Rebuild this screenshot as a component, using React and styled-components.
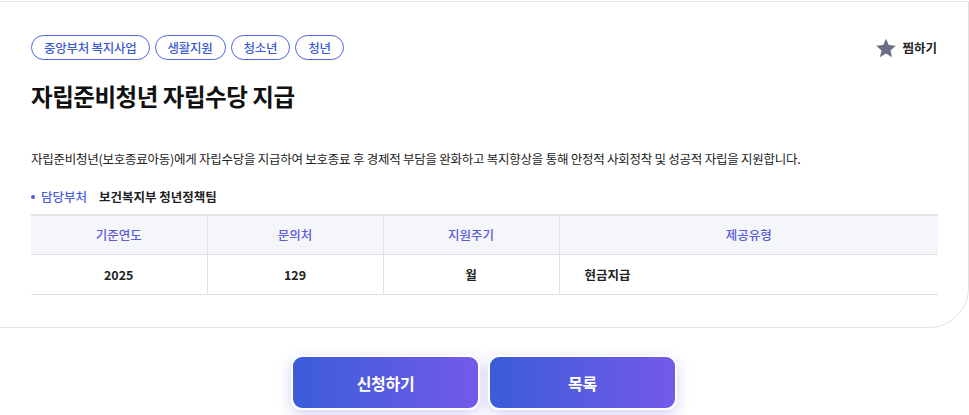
import React from 'react'
import styled, { createGlobalStyle } from 'styled-components'

const GlobalStyle = createGlobalStyle`
    * { box-sizing: border-box; }
    body {
        margin: 0;
        background: #fff;
        font-family: "Noto Sans CJK KR", "Noto Sans", sans-serif;
        color: #222;
        overflow: hidden;
    }
`

const StyledPage = styled.div`
    width: 969px;
    height: 415px;
    padding-top: 1px;
`

const StyledCard = styled.section`
    width: 971px;
    margin-left: -2px;
    height: 327px;
    border: 1px solid #e2e2e4;
    border-radius: 0 0 40px 4px;
    padding: 33px 31px 0 32px;
`

const StyledTop = styled.div`
    display: flex;
    align-items: center;
    justify-content: space-between;
`

const StyledTags = styled.ul`
    display: flex;
    gap: 5px;
    list-style: none;
    margin: 0;
    padding: 0;
`

const StyledTag = styled.li`
    height: 25px;
    padding: 0 12px;
    border: 1px solid #4a69e2;
    border-radius: 13px;
    color: #3d5bd6;
    font-size: 12.5px;
    font-weight: 500;
    display: flex;
    align-items: center;
    letter-spacing: -0.02em;
`

const StyledLike = styled.button`
    display: flex;
    align-items: center;
    gap: 5px;
    border: none;
    background: none;
    padding: 0;
    font-family: inherit;
    font-size: 12.5px;
    font-weight: 700;
    color: #222;
    svg {
        width: 22px;
        height: 22px;
    }
`

const StyledTitle = styled.h1`
    margin: 20px 0 0;
    font-size: 23.5px;
    font-weight: 700;
    color: #111;
    letter-spacing: -0.02em;
    line-height: 32px;
`

const StyledDesc = styled.p`
    margin: 37px 0 0;
    font-size: 12.5px;
    line-height: 20px;
    color: #222;
    letter-spacing: -0.02em;
`

const StyledDept = styled.div`
    display: flex;
    align-items: center;
    margin-top: 18px;
    font-size: 12.5px;
    line-height: 20px;
    span {
        color: #4a5fe0;
        font-weight: 500;
        display: flex;
        align-items: center;
        gap: 6px;
        margin-right: 12px;
        &::before {
            content: "";
            width: 4px;
            height: 4px;
            border-radius: 50%;
            background: #4a5fe0;
        }
    }
    strong {
        font-weight: 700;
        color: #222;
    }
`

const StyledTable = styled.table`
    width: 907px;
    margin-top: 7px;
    border-collapse: collapse;
    border-top: 2px solid #e1e2e6;
    font-size: 12.5px;
    th, td {
        height: 39px;
        border-bottom: 1px solid #dfe0e4;
        text-align: center;
        padding: 0;
        &:not(:last-child) {
            border-right: 1px solid #dfe0e4;
        }
    }
    th {
        background: #f5f6fa;
        color: #5a5cdc;
        font-weight: 500;
        width: 176px;
        &:last-child { width: auto; }
    }
    td {
        height: 40px;
        font-weight: 700;
        color: #222;
    }
`

const StyledCell = styled.td`
    text-align: ${props => props.$left ? 'left' : 'center'} !important;
    padding-left: ${props => props.$left ? '25px' : '0'} !important;
`

const StyledActions = styled.div`
    display: flex;
    justify-content: center;
    gap: 8px;
    margin-top: 27px;
    padding-right: 1px;
`

const StyledButton = styled.button`
    width: 189px;
    height: 55px;
    border: 2px solid #fff;
    border-radius: 11px;
    background: linear-gradient(90deg, #3b5cd9 0%, #5a5be0 55%, #735ae9 100%);
    box-shadow: 0 4px 14px rgba(96, 90, 220, 0.28);
    color: #fff;
    font-family: inherit;
    font-size: 16px;
    font-weight: 700;
    letter-spacing: -0.02em;
`

const StarIcon = () => (
    <svg viewBox="0 0 24 24">
        <path fill="#6b6f85" d="M12 1.8l3.05 7.05 7.65.7-5.8 5.05 1.75 7.5L12 18.1l-6.65 4 1.75-7.5-5.8-5.05 7.65-.7z" />
    </svg>
)

const App = () => {
    const tags = ["중앙부처 복지사업", "생활지원", "청소년", "청년"]
    const heads = ["기준연도", "문의처", "지원주기", "제공유형"]

    return (
        <StyledPage>
            <GlobalStyle />
            <StyledCard>
                <StyledTop>
                    <StyledTags>
                        {tags.map((tag, index) => (
                            <StyledTag key={index}>{tag}</StyledTag>
                        ))}
                    </StyledTags>
                    <StyledLike><StarIcon />찜하기</StyledLike>
                </StyledTop>
                <StyledTitle>자립준비청년 자립수당 지급</StyledTitle>
                <StyledDesc>
                    자립준비청년(보호종료아동)에게 자립수당을 지급하여 보호종료 후 경제적 부담을 완화하고 복지향상을 통해 안정적 사회정착 및 성공적 자립을 지원합니다.
                </StyledDesc>
                <StyledDept>
                    <span>담당부처</span>
                    <strong>보건복지부 청년정책팀</strong>
                </StyledDept>
                <StyledTable>
                    <thead>
                        <tr>
                            {heads.map((head, index) => <th key={index}>{head}</th>)}
                        </tr>
                    </thead>
                    <tbody>
                        <tr>
                            <StyledCell>2025</StyledCell>
                            <StyledCell>129</StyledCell>
                            <StyledCell>월</StyledCell>
                            <StyledCell $left>현금지급</StyledCell>
                        </tr>
                    </tbody>
                </StyledTable>
            </StyledCard>
            <StyledActions>
                <StyledButton>신청하기</StyledButton>
                <StyledButton>목록</StyledButton>
            </StyledActions>
        </StyledPage>
    )
}

export default App
